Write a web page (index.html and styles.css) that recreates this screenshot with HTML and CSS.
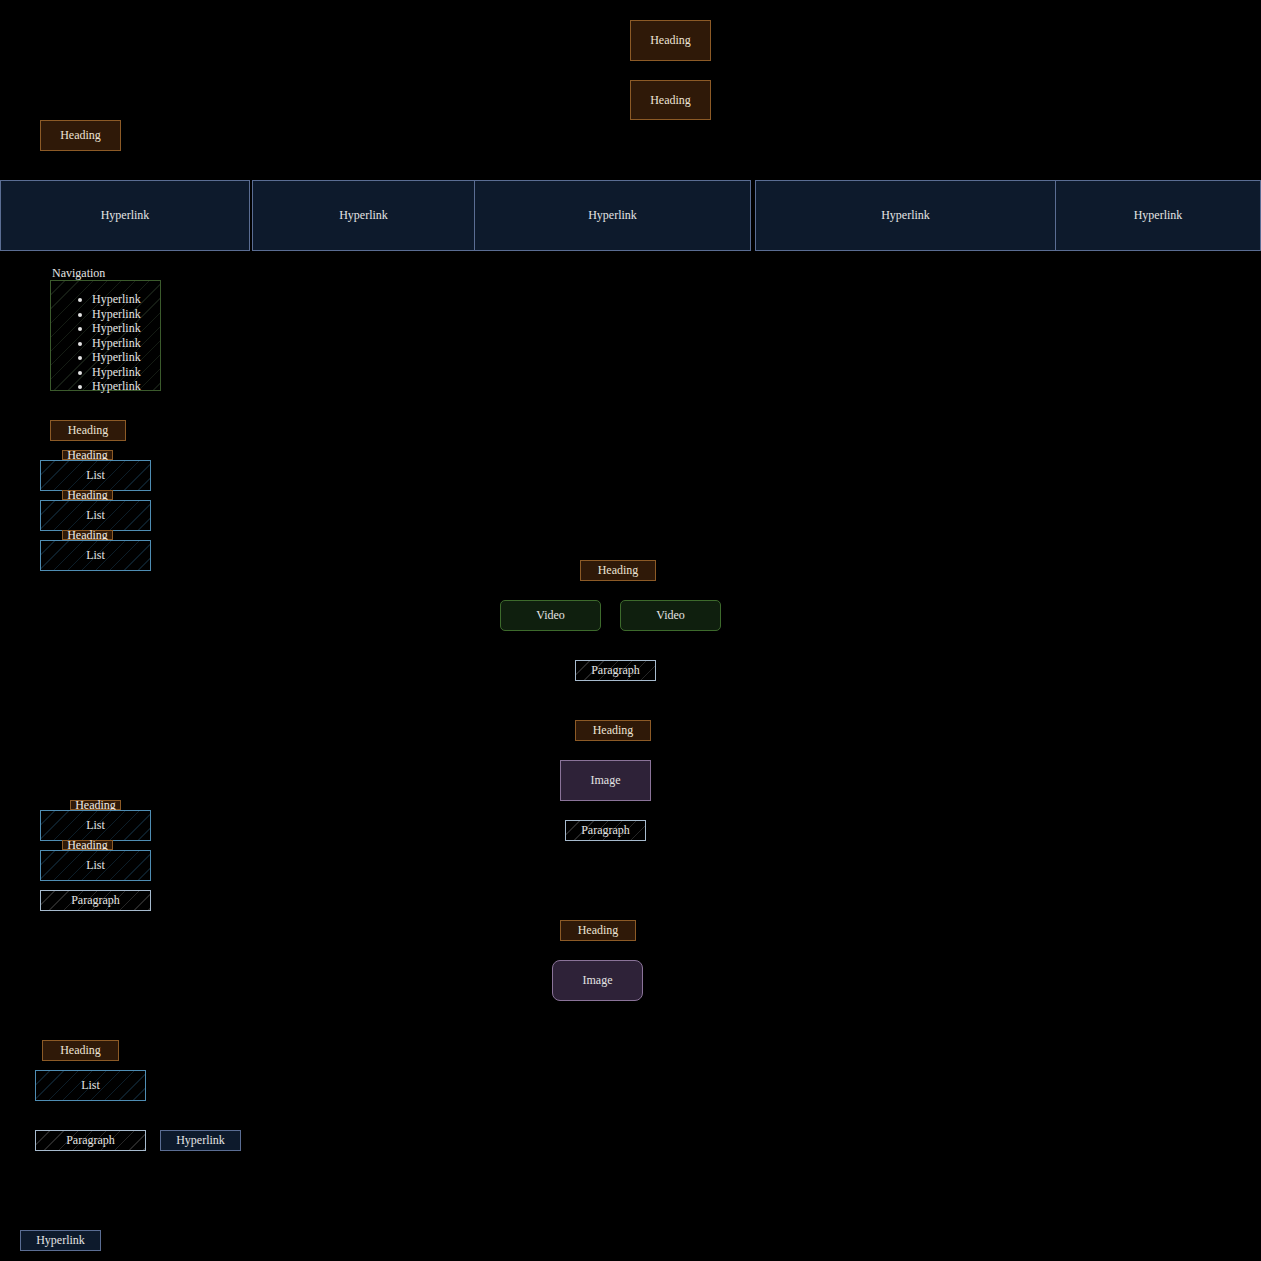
FILE: index.html
```html
<!DOCTYPE html>
<html>
<head>
    <meta charset="UTF-8">
    <meta name="viewport" content="width=device-width, initial-scale=1.0">
    <title>wireframe</title>
    <link rel="stylesheet" href="styles.css">
</head>
<body>
    <header class="top">
        <h1 class="heading big hd-a">Heading</h1>
        <h1 class="heading big hd-b">Heading</h1>
        <h2 class="heading mid hd-c">Heading</h2>
    </header>

    <nav class="menu">
        <a class="cell cell-a" href="#">Hyperlink</a>
        <div class="group group-b">
            <a class="cell cell-b1" href="#">Hyperlink</a>
            <a class="cell cell-b2" href="#">Hyperlink</a>
        </div>
        <div class="group group-c">
            <a class="cell cell-c1" href="#">Hyperlink</a>
            <a class="cell cell-c2" href="#">Hyperlink</a>
        </div>
    </nav>

    <main class="main">
        <!-- left column -->
        <div class="side">
            <div class="nav-label">Navigation</div>
            <div class="nav-box hatch">
                <ul>
                    <li>Hyperlink</li>
                    <li>Hyperlink</li>
                    <li>Hyperlink</li>
                    <li>Hyperlink</li>
                    <li>Hyperlink</li>
                    <li>Hyperlink</li>
                    <li>Hyperlink</li>
                </ul>
            </div>

            <h3 class="heading small side-hd">Heading</h3>

            <div class="card first">
                <div class="tab">Heading</div>
                <div class="list hatch">List</div>
            </div>
            <div class="card">
                <div class="tab">Heading</div>
                <div class="list hatch">List</div>
            </div>
            <div class="card">
                <div class="tab">Heading</div>
                <div class="list hatch">List</div>
            </div>

            <div class="card second">
                <div class="tab tab-shift">Heading</div>
                <div class="list hatch">List</div>
            </div>
            <div class="card">
                <div class="tab">Heading</div>
                <div class="list hatch">List</div>
            </div>
            <p class="para hatch side-para">Paragraph</p>

            <h3 class="heading small foot-hd">Heading</h3>
            <div class="list hatch foot-list">List</div>
            <div class="foot-row">
                <p class="para hatch foot-para">Paragraph</p>
                <a class="link foot-link" href="#">Hyperlink</a>
            </div>
            <a class="link last-link" href="#">Hyperlink</a>
        </div>

        <!-- center column -->
        <div class="center">
            <h3 class="heading small c-hd1">Heading</h3>
            <div class="videos">
                <div class="video">Video</div>
                <div class="video">Video</div>
            </div>
            <p class="para hatch c-para1">Paragraph</p>
            <h3 class="heading small c-hd2">Heading</h3>
            <div class="image c-img1">Image</div>
            <p class="para hatch c-para2">Paragraph</p>
            <h3 class="heading small c-hd3">Heading</h3>
            <div class="image round c-img2">Image</div>
        </div>
    </main>
</body>
</html>
```

FILE: styles.css
```css
html,
body {
    margin: 0;
    padding: 0;
}

body {
    width: 1261px;
    height: 1261px;
    background: #000;
    color: #e4e4e4;
    font-family: 'Liberation Serif', serif;
    font-size: 12px;
    overflow: hidden;
}

a {
    color: #e4e4e4;
    text-decoration: none;
}

h1, h2, h3, p {
    margin: 0;
    font-size: 12px;
    font-weight: normal;
}

/* shared box look */
.heading,
.cell,
.tab,
.list,
.para,
.link,
.video,
.image {
    box-sizing: border-box;
    display: flex;
    align-items: center;
    justify-content: center;
    border: 1px solid;
}

.heading,
.tab {
    background: #2f1908;
    border-color: #8c5a26;
    color: #ede3d4;
}

.hatch {
    background-color: #000;
    background-image: repeating-linear-gradient(135deg, transparent 0, transparent 9px, var(--hatch) 9px, var(--hatch) 10px);
}

/* header */
.top {
    height: 180px;
    overflow: hidden;
}

.big {
    width: 81px;
    height: 41px;
    margin-left: 630px;
}

.hd-a {
    margin-top: 20px;
}

.hd-b {
    margin-top: 19px;
    height: 40px;
}

.mid {
    width: 81px;
    height: 31px;
    margin-left: 40px;
}

/* top menu */
.menu {
    display: flex;
    height: 71px;
}

.cell {
    height: 71px;
    background: #0d1a2c;
    border-color: #5a6d93;
}

.group {
    display: flex;
}

.cell-a {
    width: 251px;
}

.group-b {
    margin-left: 2px;
}

.cell-b1 {
    width: 223px;
}

.cell-b2 {
    width: 276px;
    border-left: 0;
}

.group-c {
    margin-left: 4px;
}

.cell-c1 {
    width: 301px;
}

.cell-c2 {
    width: 205px;
    border-left: 0;
}

/* main area */
.main {
    display: grid;
    grid-template-columns: 500px 1fr;
}

.side,
.center {
    display: flex;
    flex-direction: column;
    align-items: flex-start;
}

.nav-label {
    margin: 15px 0 0 52px;
    line-height: 14px;
}

.nav-box {
    --hatch: #141b13;
    box-sizing: border-box;
    width: 111px;
    height: 111px;
    margin-left: 50px;
    border: 1px solid #3b5a2c;
}

.nav-box ul {
    margin: 11px 0 0;
    padding-left: 41px;
    line-height: 14.5px;
}

.small {
    width: 76px;
    height: 21px;
}

.side-hd {
    margin: 29px 0 0 50px;
}

.card {
    display: flex;
    flex-direction: column;
    align-items: flex-start;
    margin-top: -1px;
}

.card.first {
    margin-top: 9px;
}

.card.second {
    margin-top: 229px;
}

.tab {
    width: 51px;
    height: 10px;
    margin-left: 62px;
    color: #f2ece4;
}

.tab-shift {
    margin-left: 70px;
}

.list {
    --hatch: #0c1d28;
    width: 111px;
    height: 31px;
    margin-left: 40px;
    border-color: #4f8db3;
}

.para {
    --hatch: #262626;
    width: 111px;
    height: 21px;
    border-color: #a6bacd;
}

.side-para {
    margin: 9px 0 0 40px;
}

.foot-hd {
    width: 77px;
    margin: 129px 0 0 42px;
}

.foot-list {
    margin: 9px 0 0 35px;
}

.foot-row {
    display: flex;
    gap: 14px;
    margin: 29px 0 0 35px;
}

.link {
    width: 81px;
    height: 21px;
    background: #0d1a2c;
    border-color: #5a6d93;
}

.last-link {
    margin: 79px 0 0 20px;
}

/* center column */
.c-hd1 {
    margin: 309px 0 0 80px;
}

.videos {
    display: flex;
    gap: 19px;
    margin-top: 19px;
}

.video {
    width: 101px;
    height: 31px;
    border-radius: 5px;
    background: #0f1f0e;
    border-color: #3d6a2c;
}

.c-para1 {
    width: 81px;
    margin: 29px 0 0 75px;
}

.c-hd2 {
    margin: 39px 0 0 75px;
}

.image {
    width: 91px;
    height: 41px;
    background: #2e2238;
    border-color: #8a7399;
}

.c-img1 {
    margin: 19px 0 0 60px;
}

.c-para2 {
    width: 81px;
    margin: 19px 0 0 65px;
}

.c-hd3 {
    margin: 79px 0 0 60px;
}

.round {
    border-radius: 8px;
}

.c-img2 {
    margin: 19px 0 0 52px;
}
```
